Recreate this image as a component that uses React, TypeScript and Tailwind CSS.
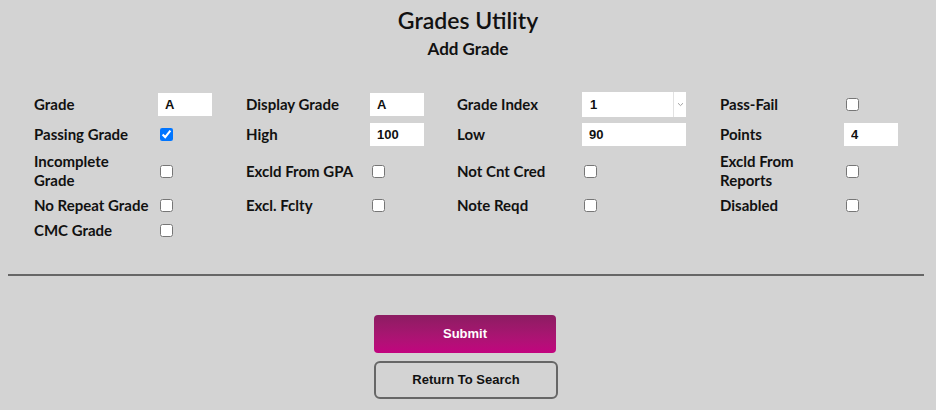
import React from "react";

const LABEL = "font-['Lato','Liberation_Sans',sans-serif] text-[15px] font-bold leading-[19px] text-[#111]";
const INPUT =
  "h-[23px] bg-white pl-[7px] font-['Liberation_Sans',Arial,sans-serif] text-[13px] font-bold text-[#111] outline-none";

function Label({ children }: { children: React.ReactNode }) {
  return <div className={`${LABEL} self-center`}>{children}</div>;
}

function TextField({ value, width = "w-[54px]" }: { value: string; width?: string }) {
  return (
    <div className="flex items-center">
      <input type="text" defaultValue={value} className={`${INPUT} ${width}`} />
    </div>
  );
}

function Check({ checked = false }: { checked?: boolean }) {
  return (
    <div className="flex items-center">
      <input type="checkbox" defaultChecked={checked} className="m-0 ml-[2px] h-[13px] w-[13px]" />
    </div>
  );
}

function GradeIndexSelect() {
  return (
    <div className="flex h-[25px] w-[104px] items-stretch bg-white">
      <div className="flex flex-1 items-center pl-[8px] font-['Liberation_Sans',Arial,sans-serif] text-[13px] font-bold text-[#111]">
        1
      </div>
      <div className="flex w-[13px] items-center justify-center border-l border-[#e2e2e2]">
        <svg width="7" height="5" viewBox="0 0 7 5" fill="none">
          <path d="M1 1.2l2.5 2.4L6 1.2" stroke="#a0a0a0" strokeWidth="1" />
        </svg>
      </div>
    </div>
  );
}

function Empty() {
  return <div />;
}

export default function App() {
  return (
    <div className="min-h-[410px] w-full bg-[#d3d3d3] pt-[7px]">
      <h1 className="text-center font-['Lato','Liberation_Sans',sans-serif] text-[23px] font-semibold leading-[26px] text-[#111]">
        Grades Utility
      </h1>
      <h2 className="mt-[6px] text-center font-['Lato','Liberation_Sans',sans-serif] text-[17px] font-bold leading-[20px] text-[#111]">
        Add Grade
      </h2>

      <div className="mt-[33px] grid grid-cols-[124px_88px_124px_87px_125px_138px_124px_1fr] gap-y-[6px] pl-[34px]">
        {/* row 1 */}
        <Label>Grade</Label>
        <TextField value="A" />
        <Label>Display Grade</Label>
        <TextField value="A" />
        <Label>Grade Index</Label>
        <GradeIndexSelect />
        <Label>Pass-Fail</Label>
        <Check />

        {/* row 2 */}
        <Label>Passing Grade</Label>
        <Check checked />
        <Label>High</Label>
        <TextField value="100" />
        <Label>Low</Label>
        <TextField value="90" width="w-[104px]" />
        <Label>Points</Label>
        <TextField value="4" />

        {/* row 3 */}
        <Label>
          Incomplete
          <br />
          Grade
        </Label>
        <Check />
        <Label>Excld From GPA</Label>
        <Check />
        <Label>Not Cnt Cred</Label>
        <Check />
        <Label>
          Excld From
          <br />
          Reports
        </Label>
        <Check />

        {/* row 4 */}
        <Label>No Repeat Grade</Label>
        <Check />
        <Label>Excl. Fclty</Label>
        <Check />
        <Label>Note Reqd</Label>
        <Check />
        <Label>Disabled</Label>
        <Check />

        {/* row 5 */}
        <Label>CMC Grade</Label>
        <Check />
        <Empty />
        <Empty />
        <Empty />
        <Empty />
        <Empty />
        <Empty />
      </div>

      <hr className="ml-[8px] mr-[12px] mt-[34px] border-0 border-t-2 border-[#666]" />

      <div className="ml-[374px] mt-[39px] flex w-[184px] flex-col gap-[8px] pb-[12px]">
        <button
          type="button"
          className="h-[38px] w-[182px] rounded-[4px] bg-gradient-to-b from-[#8c1c62] to-[#c2037f] font-['Liberation_Sans',Arial,sans-serif] text-[13px] font-bold text-white"
        >
          Submit
        </button>
        <button
          type="button"
          className="h-[38px] w-[184px] rounded-[6px] border-2 border-[#666] bg-transparent font-['Liberation_Sans',Arial,sans-serif] text-[13px] font-bold text-[#111]"
        >
          Return To Search
        </button>
      </div>
    </div>
  );
}
